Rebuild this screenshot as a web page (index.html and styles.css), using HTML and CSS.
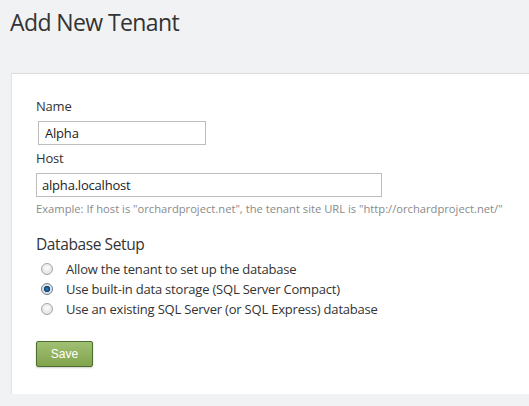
FILE: index.html
```html
<!DOCTYPE html>
<html>
<head>
<meta charset="utf-8">
<link rel="stylesheet" href="styles.css">
</head>
<body>
<h1 class="title">Add New Tenant</h1>
<div class="panel">
  <form class="form">
    <label class="label" for="name">Name</label>
    <input class="input input-name" id="name" type="text" value="Alpha">
    <label class="label label-host" for="host">Host</label>
    <input class="input input-host" id="host" type="text" value="alpha.localhost">
    <p class="hint">Example: If host is "orchardproject.net", the tenant site URL is "http://orchardproject.net/"</p>
    <h2 class="section">Database Setup</h2>
    <div class="options">
      <label class="option"><input class="radio" type="radio" name="db"><span>Allow the tenant to set up the database</span></label>
      <label class="option"><input class="radio" type="radio" name="db" checked><span>Use built-in data storage (SQL Server Compact)</span></label>
      <label class="option"><input class="radio" type="radio" name="db"><span>Use an existing SQL Server (or SQL Express) database</span></label>
    </div>
    <button class="save" type="button">Save</button>
  </form>
</div>
</body>
</html>
```
FILE: styles.css
```css
html, body {
  margin: 0;
  padding: 0;
  background: #f1f2f4;
  font-family: "Open Sans", "Noto Sans", sans-serif;
  color: #333;
  overflow: hidden;
}
.title {
  margin: 0;
  padding: 6px 0 0 10px;
  font-size: 23px;
  letter-spacing: -0.6px;
  font-weight: 400;
  line-height: 32px;
  color: #333;
}
.panel {
  margin: 35px 0 0 12px;
  background: #fff;
  border-top: 1px solid #dcdde0;
  box-shadow: 0 1px 1px #d8d9dc, -1px 0 1px #e4e5e8;
  height: 321px;
  box-sizing: border-box;
}
.form {
  display: flex;
  flex-direction: column;
  align-items: flex-start;
  padding: 23px 0 0 24px;
}
.label {
  font-size: 13px;
  letter-spacing: -0.2px;
  line-height: 18px;
  color: #333;
}
.input {
  box-sizing: border-box;
  height: 24px;
  border: 1px solid #bdbdbd;
  font-family: inherit;
  font-size: 13px;
  letter-spacing: -0.2px;
  color: #222;
  padding: 0 6px;
  margin: 0;
  outline: none;
}
.input-name {
  width: 168px;
  margin: 6px 0 0 2px;
}
.label-host {
  margin-top: 4px;
}
.input-host {
  width: 346px;
  margin-top: 6px;
  padding-left: 5px;
}
.hint {
  margin: 4px 0 0;
  font-size: 11.2px;
  line-height: 16px;
  color: #8a8a8a;
}
.section {
  margin: 16px 0 0;
  font-size: 15.5px;
  letter-spacing: -0.4px;
  font-weight: 400;
  line-height: 22px;
  color: #333;
}
.options {
  display: flex;
  flex-direction: column;
  margin-top: 4px;
}
.option {
  display: flex;
  align-items: center;
  height: 20px;
  font-size: 13px;
  letter-spacing: -0.2px;
  color: #333;
}
.radio {
  appearance: none;
  -webkit-appearance: none;
  margin: 0 13px 0 5px;
  width: 12px;
  height: 12px;
  border-radius: 50%;
  border: 1px solid #a5a5a5;
  background: radial-gradient(circle at 50% 40%, #fdfdfd 0%, #e4e4e4 70%, #d2d2d2 100%);
  box-sizing: border-box;
}
.radio:checked {
  border-color: #6c7d8e;
  background: radial-gradient(circle at 50% 50%, #2d7fc6 0%, #0f4f8c 32%, #1a3c5e 40%, #d8dde2 48%, #f4f4f4 100%);
}
.save {
  margin-top: 22px;
  width: 57px;
  height: 26px;
  border: 1px solid #4d6d2f;
  border-radius: 2px;
  background: linear-gradient(#a0c073, #82a34d);
  color: #fff;
  font-family: "Liberation Sans", Arial, sans-serif;
  font-size: 12px;
  box-shadow: 0 1px 2px rgba(0,0,0,0.2);
  padding: 0;
}
```
